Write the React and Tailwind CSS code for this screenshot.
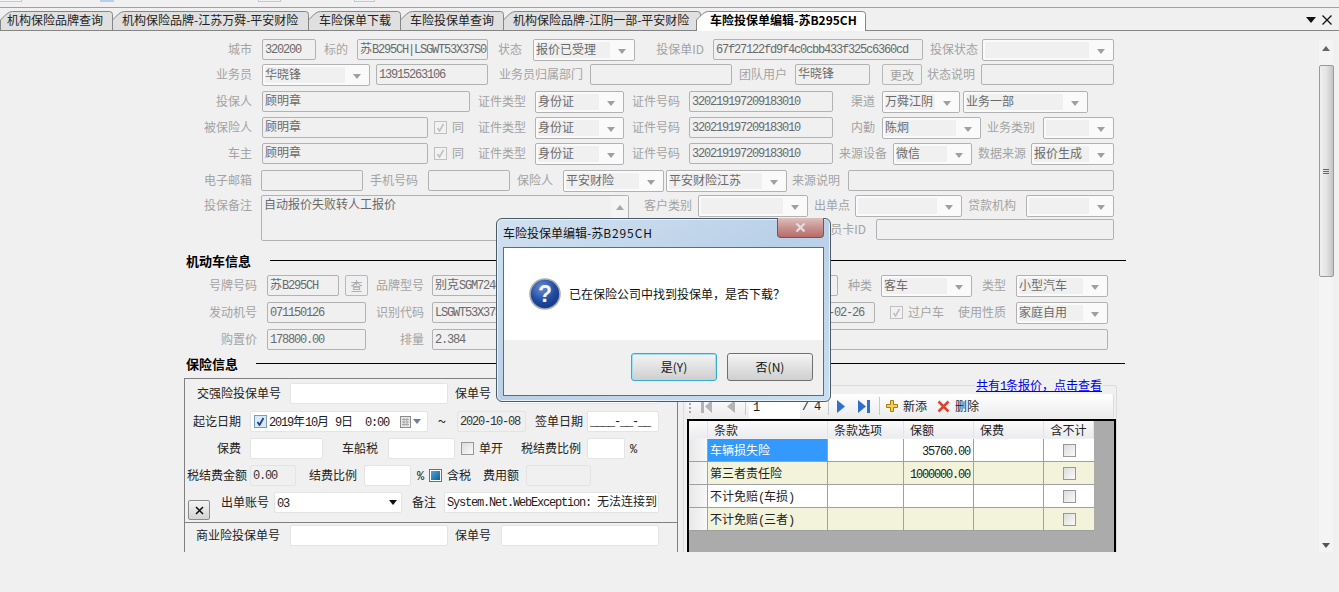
import React from 'react'

const MONO = "font-['Liberation_Mono',monospace] text-[12px] tracking-[-1.2px]"

// latin runs get the narrow mono face, the rest stays CJK
function Sim({ text }) {
  return text.split(/([\u3400-\u9fff，：]+)/).map((part, i) =>
    /[\u3400-\u9fff]/.test(part)
      ? <span key={i}>{part}</span>
      : <span key={i} className={MONO}>{part}</span>
  )
}

const Lbl = ({ className = '', children }) => (
  <span className={`shrink-0 text-right text-[#a3a3a3] leading-[19px] h-[21px] whitespace-pre ${className}`}>{children}</span>
)

const BLbl = ({ className = '', children }) => (
  <span className={`shrink-0 text-right text-[#222222] leading-[19px] h-[21px] whitespace-pre ${className}`}>{children}</span>
)

const Inp = ({ className = '', text = '' }) => (
  <div className={`shrink-0 h-[21px] border border-[#b2b2b2] rounded-[2px] bg-[#f0f0f0] pl-[2px] text-[#6a6a6a] leading-[16px] whitespace-pre overflow-hidden ${className}`}>
    <Sim text={text} />
  </div>
)

const WInp = ({ className = '', text = '' }) => (
  <div className={`shrink-0 h-[21px] border border-[#e4e4e4] rounded-[2px] bg-white pl-[2px] text-[#222222] leading-[16px] whitespace-pre overflow-hidden ${className}`}>
    <Sim text={text} />
  </div>
)

const RO = ({ className = '', text = '' }) => (
  <div className={`shrink-0 h-[21px] border border-[#e4e4e4] rounded-[2px] bg-[#f0f0f0] pl-[2px] text-[#333333] leading-[16px] whitespace-pre overflow-hidden ${className}`}>
    <Sim text={text} />
  </div>
)

const Tri = ({ className = '', color = '#a0a0a0' }) => (
  <svg width="8" height="5" viewBox="0 0 8 5" className={`shrink-0 ${className}`}>
    <path d="M0 0H8L4 5Z" fill={color} />
  </svg>
)

const Combo = ({ className = '', text = '' }) => (
  <div className={`shrink-0 h-[22px] flex border border-[#b2b2b2] rounded-[2px] bg-[#fafafa] pl-[2px] py-[2px] ${className}`}>
    <div className="flex-1 min-w-0 bg-[#f0f0f0] text-[#6a6a6a] leading-[14px] whitespace-pre">{text}</div>
    <div className="w-[24px] shrink-0 flex items-center justify-center pt-[2px]"><Tri /></div>
  </div>
)

const GBtn = ({ className = '', children }) => (
  <div className={`shrink-0 h-[21px] border border-[#b8b8b8] rounded-[2px] bg-[#f0f0f0] text-[#a3a3a3] flex items-center justify-center ${className}`}>{children}</div>
)

const GCheck = ({ className = '' }) => (
  <div className={`shrink-0 w-[13px] h-[13px] mt-[4px] border border-[#c0c0c0] bg-[#f2f2f2] flex items-center justify-center ${className}`}>
    <svg width="9" height="9" viewBox="0 0 9 9"><path d="M1.5 5L3.5 8L7.5 1" fill="none" stroke="#c0c0c0" strokeWidth="1.6" /></svg>
  </div>
)

const Box = ({ className = '' }) => (
  <div className={`shrink-0 w-[13px] h-[13px] border border-[#979797] bg-gradient-to-br from-[#dcdcdc] to-[#fafafa] ${className}`} />
)

const Row = ({ className = '', children }) => (
  <div className={`flex items-start shrink-0 ${className}`}>{children}</div>
)

const Section = ({ title, lineClass }) => (
  <div className="flex items-center h-[15px] pl-[186px] shrink-0">
    <span className="text-[13px] font-bold text-black leading-none whitespace-pre">{title}</span>
    <div className={`h-px bg-black w-full ${lineClass}`} />
  </div>
)

const tabs = [
  { text: '机构保险品牌查询', w: 113, box: 'w-[113px] pl-[7px]' },
  { text: '机构保险品牌-江苏万舜-平安财险', w: 197, box: 'w-[197px] pl-[10px] -ml-px' },
  { text: '车险保单下载', w: 93, box: 'w-[93px] pl-[11px] -ml-px' },
  { text: '车险投保单查询', w: 104, box: 'w-[104px] pl-[10px] -ml-px' },
  { text: '机构保险品牌-江阴一部-平安财险', w: 198, box: 'w-[198px] pl-[10px] -ml-px' },
]

function Tab({ text, w, box, active }) {
  const d = `M0.5 23V13L6.5 7Q9.5 4.5 12.5 4.5H${w - 3.5}Q${w - 0.5} 4.5 ${w - 0.5} 7.5V23`
  return (
    <div className={`relative shrink-0 h-[24px] ${box}`}>
      <svg width={w} height="24" viewBox={`0 0 ${w} 24`} className="absolute left-0 top-0">
        <path d={d} fill={active ? '#ffffff' : '#e0e0e0'} stroke="#858585" />
      </svg>
      <span className={`relative block pt-[4px] leading-[18px] whitespace-pre ${active ? 'font-bold text-black' : 'text-[#222222]'}`}>{text}</span>
    </div>
  )
}

const clauses = [
  { name: '车辆损失险', amount: '35760.00', bg: 'bg-white', first: 'bg-[#3399ff] text-white' },
  { name: '第三者责任险', amount: '1000000.00', bg: 'bg-[#f3f3dc]', first: '' },
  { name: '不计免赔(车损)', amount: '', bg: 'bg-white', first: '' },
  { name: '不计免赔(三者)', amount: '', bg: 'bg-[#f3f3dc]', first: '' },
]

function ClauseGrid() {
  const headCell = 'h-[17px] border-r border-[#e4e4e4] bg-gradient-to-b from-[#fbfbfb] to-[#ececf0] text-[#222222] pl-[6px] leading-[17px] shrink-0'
  return (
    <div className="mt-px ml-[3px] w-[429px] h-[200px] bg-[#ababab] border-t-2 border-x-2 border-black">
      <div className="flex">
        <div className={`${headCell} w-[19px]`} />
        <div className={`${headCell} w-[120px]`}>条款</div>
        <div className={`${headCell} w-[76px]`}>条款选项</div>
        <div className={`${headCell} w-[70px]`}>保额</div>
        <div className={`${headCell} w-[70px]`}>保费</div>
        <div className={`${headCell} w-[50px] text-center !pl-0`}>含不计</div>
      </div>
      <div className="h-px bg-[#f0f0f0] w-[405px]" />
      {clauses.map((c) => (
        <div key={c.name} className="flex h-[23px] w-[405px] border-b border-[#a0a0a0]">
          <div className="w-[19px] shrink-0 border-r border-[#a0a0a0] bg-gradient-to-r from-[#e8e8e8] to-[#f8f8f8]" />
          <div className={`w-[120px] shrink-0 border-r border-[#a0a0a0] pl-[2px] leading-[22px] whitespace-pre ${c.first || `${c.bg} text-[#222222]`}`}><Sim text={c.name} /></div>
          <div className={`w-[76px] shrink-0 border-r border-[#a0a0a0] ${c.bg}`} />
          <div className={`w-[70px] shrink-0 border-r border-[#a0a0a0] text-right pr-[3px] leading-[22px] text-[#222222] ${c.bg}`}><Sim text={c.amount} /></div>
          <div className={`w-[70px] shrink-0 border-r border-[#a0a0a0] ${c.bg}`} />
          <div className={`w-[50px] shrink-0 flex items-center justify-center ${c.bg}`}><Box /></div>
        </div>
      ))}
    </div>
  )
}

function GridToolbar() {
  return (
    <div className="ml-[3px] w-[427px] h-[24px] flex items-center bg-gradient-to-b from-white to-[#ececec] rounded-t-[3px] border-r border-[#dcdcdc] text-[#222222]">
      <div className="ml-[2px] w-[3px] h-[14px] shrink-0 border-l-2 border-dotted border-[#a8a8a8]" />
      <svg width="11" height="13" viewBox="0 0 11 13" className="ml-[9px] shrink-0"><path d="M0 0H3V13H0ZM11 0V13L4 6.5Z" fill="#b4b4b4" /></svg>
      <svg width="8" height="13" viewBox="0 0 8 13" className="ml-[15px] shrink-0"><path d="M8 0V13L0 6.5Z" fill="#b4b4b4" /></svg>
      <div className="ml-[10px] w-px h-[18px] bg-[#c8c8c8] shrink-0" />
      <div className="ml-[3px] w-[51px] h-[24px] bg-white pl-[4px] leading-[24px] shrink-0"><Sim text="1" /></div>
      <span className="ml-[2px] w-[17px] shrink-0 whitespace-pre"><Sim text="/ 4" /></span>
      <div className="ml-[9px] w-px h-[18px] bg-[#c8c8c8] shrink-0" />
      <svg width="8" height="13" viewBox="0 0 8 13" className="ml-[8px] shrink-0"><path d="M0 0L8 6.5L0 13Z" fill="#2f6fd0" /></svg>
      <svg width="12" height="13" viewBox="0 0 12 13" className="ml-[13px] shrink-0"><path d="M0 0L8 6.5L0 13ZM9 0H12V13H9Z" fill="#2f6fd0" /></svg>
      <div className="ml-[9px] w-px h-[18px] bg-[#c8c8c8] shrink-0" />
      <svg width="12" height="12" viewBox="0 0 12 12" className="ml-[6px] shrink-0"><path d="M4.5 .5H7.5V4.5H11.5V7.5H7.5V11.5H4.5V7.5H.5V4.5H4.5Z" fill="#f7cf4f" stroke="#a87b12" /></svg>
      <span className="ml-[5px] w-[24px] shrink-0">新添</span>
      <svg width="13" height="13" viewBox="0 0 13 13" className="ml-[10px] shrink-0"><path d="M1.5 1.5L11.5 11.5M11.5 1.5L1.5 11.5" stroke="#e2412c" strokeWidth="2.6" /></svg>
      <span className="ml-[5px] w-[24px] shrink-0">删除</span>
    </div>
  )
}

function Dialog() {
  return (
    <div className="absolute left-[496px] top-[218px] w-[335px] h-[184px] rounded-[6px] border border-[#4a5a68] bg-gradient-to-br from-[#d2e1f0] via-[#b9d0e8] to-[#c8def2] px-[6px] shadow-[inset_0_0_0_1px_#e6f0f8]">
      <div className="h-[28px] leading-[27px] text-[#111111] whitespace-pre">车险投保单编辑-苏<span className="tracking-[0.9px]">B295CH</span></div>
      <div className="absolute right-[6px] -top-px w-[47px] h-[20px] rounded-b-[4px] border border-t-0 border-[#6a5a5a] bg-gradient-to-b from-[#d9c0be] via-[#c99290] to-[#b86b68] flex items-center justify-center">
        <svg width="11" height="9" viewBox="0 0 11 9"><path d="M1.5 .5L9.5 8.5M9.5 .5L1.5 8.5" stroke="#e8dcdc" strokeWidth="2.2" /></svg>
      </div>
      <div className="h-[149px] border border-[#5d6b7a] bg-white flex flex-col">
        <div className="h-[92px] flex items-center shrink-0">
          <svg width="32" height="32" viewBox="0 0 32 32" className="ml-[25px] shrink-0">
            <defs>
              <radialGradient id="qball" cx="0.4" cy="0.3" r="0.8">
                <stop offset="0" stopColor="#6d8fd0" />
                <stop offset="0.55" stopColor="#1f4b9f" />
                <stop offset="1" stopColor="#14317e" />
              </radialGradient>
            </defs>
            <circle cx="16" cy="16" r="15" fill="url(#qball)" stroke="#a9aeb4" strokeWidth="1.6" />
            <text x="16" y="24" textAnchor="middle" fontSize="23" fontWeight="700" fill="#f4f6fa" fontFamily="Liberation Sans, sans-serif">?</text>
          </svg>
          <span className="ml-[8px] text-[#111111] whitespace-pre">已在保险公司中找到投保单，是否下载？</span>
        </div>
        <div className="flex-1 bg-[#f0f0f0] flex justify-end gap-[10px] pr-[10px] pt-[13px]">
          <div className="w-[86px] h-[28px] rounded-[3px] border border-[#3aa8d8] bg-gradient-to-b from-[#f4f4f4] to-[#cfcfcf] flex items-center justify-center text-[#111111] shadow-[inset_0_0_0_1px_#9fe0f8]">是(Y)</div>
          <div className="w-[86px] h-[28px] rounded-[3px] border border-[#707070] bg-gradient-to-b from-[#f4f4f4] to-[#cfcfcf] flex items-center justify-center text-[#111111]">否(N)</div>
        </div>
      </div>
    </div>
  )
}

export default function App() {
  return (
    <div className="relative w-[1339px] h-[592px] overflow-hidden bg-[#f0f0f0] text-[12px] [text-spacing-trim:space-all] font-['Noto_Sans_CJK_SC','Liberation_Sans',sans-serif]">
      {/* cut off toolbar above the tabs */}
      <div className="h-[8px] border-b border-[#a0a0a0] flex items-start">
        <div className="w-[22px] h-[2px] border-b border-r border-[#c8c8c8] bg-[#f4f4f4]" />
        <div className="ml-[78px] w-[14px] h-[2px] bg-[#b8cfe8]" />
        <div className="ml-[144px] w-[23px] h-[2px] border border-t-0 border-[#c8c8c8]" />
        <div className="ml-[73px] w-[21px] h-[2px] border border-t-0 border-[#c8c8c8]" />
      </div>

      {/* tab strip */}
      <div className="relative h-[24px] -mt-px flex items-start">
        <div className="absolute left-0 right-0 top-[23px] h-px bg-[#858585]" />
        {tabs.map((t) => <Tab key={t.text} {...t} />)}
        <Tab text="车险投保单编辑-苏B295CH" w={170} box="w-[170px] pl-[14px] -ml-[5px]" active />
        <div className="absolute left-[697px] top-[23px] w-[168px] h-px bg-white" />
        <svg width="10" height="6" viewBox="0 0 10 6" className="absolute left-[1306px] top-[10px]"><path d="M0 0H10L5 6Z" fill="#111111" /></svg>
        <svg width="10" height="10" viewBox="0 0 10 10" className="absolute left-[1322px] top-[8px]"><path d="M.5 .5L9.5 9.5M9.5 .5L.5 9.5" stroke="#111111" strokeWidth="1.3" /></svg>
      </div>

      <div className="flex h-[521px] overflow-hidden">
        <div className="w-[1319px] shrink-0 flex flex-col pt-[8px]">
          <Row className="h-[25px]">
            <Lbl className="w-[252px]">城市</Lbl>
            <Inp className="ml-[10px] w-[54px]" text="320200" />
            <Lbl className="w-[32px]">标的</Lbl>
            <Inp className="ml-[9px] w-[131px]" text="苏B295CH|LSGWT53X37S0" />
            <Lbl className="w-[34px]">状态</Lbl>
            <Combo className="ml-[11px] w-[102px]" text="报价已受理" />
            <Lbl className="w-[69px]">投保单ID</Lbl>
            <Inp className="ml-[9px] w-[210px]" text="67f27122fd9f4c0cbb433f325c6360cd" />
            <Lbl className="w-[55px]">投保状态</Lbl>
            <Combo className="ml-[4px] w-[132px]" />
          </Row>
          <Row className="h-[27px]">
            <Lbl className="w-[252px]">业务员</Lbl>
            <Combo className="ml-[10px] w-[108px]" text="华晓锋" />
            <Inp className="ml-[6px] w-[112px]" text="13915263106" />
            <Lbl className="w-[95px]">业务员归属部门</Lbl>
            <Inp className="ml-[7px] w-[142px]" />
            <Lbl className="w-[55px]">团队用户</Lbl>
            <Inp className="ml-[8px] w-[75px]" text="华晓锋" />
            <GBtn className="ml-[12px] w-[40px]">更改</GBtn>
            <Lbl className="w-[53px]">状态说明</Lbl>
            <Inp className="ml-[6px] w-[133px]" />
          </Row>
          <Row className="h-[26px]">
            <Lbl className="w-[252px]">投保人</Lbl>
            <Inp className="ml-[10px] w-[208px]" text="顾明章" />
            <Lbl className="w-[56px]">证件类型</Lbl>
            <Combo className="ml-[9px] w-[89px]" text="身份证" />
            <Lbl className="w-[56px]">证件号码</Lbl>
            <Inp className="ml-[9px] w-[144px]" text="320219197209183010" />
            <Lbl className="w-[42px]">渠道</Lbl>
            <Combo className="ml-[7px] w-[78px]" text="万舜江阴" />
            <Combo className="ml-[3px] w-[125px]" text="业务一部" />
          </Row>
          <Row className="h-[26px]">
            <Lbl className="w-[252px]">被保险人</Lbl>
            <Inp className="ml-[10px] w-[166px]" text="顾明章" />
            <GCheck className="ml-[6px]" />
            <Lbl className="ml-[5px] w-[12px]">同</Lbl>
            <Lbl className="w-[62px]">证件类型</Lbl>
            <Combo className="ml-[9px] w-[89px]" text="身份证" />
            <Lbl className="w-[56px]">证件号码</Lbl>
            <Inp className="ml-[9px] w-[144px]" text="320219197209183010" />
            <Lbl className="w-[42px]">内勤</Lbl>
            <Combo className="ml-[7px] w-[99px]" text="陈炯" />
            <Lbl className="w-[54px]">业务类别</Lbl>
            <Combo className="ml-[8px] w-[71px]" />
          </Row>
          <Row className="h-[27px]">
            <Lbl className="w-[252px]">车主</Lbl>
            <Inp className="ml-[10px] w-[166px]" text="顾明章" />
            <GCheck className="ml-[6px]" />
            <Lbl className="ml-[5px] w-[12px]">同</Lbl>
            <Lbl className="w-[62px]">证件类型</Lbl>
            <Combo className="ml-[9px] w-[89px]" text="身份证" />
            <Lbl className="w-[56px]">证件号码</Lbl>
            <Inp className="ml-[9px] w-[144px]" text="320219197209183010" />
            <Lbl className="w-[54px]">来源设备</Lbl>
            <Combo className="ml-[6px] w-[79px]" text="微信" />
            <Lbl className="w-[54px]">数据来源</Lbl>
            <Combo className="ml-[5px] w-[83px]" text="报价生成" />
          </Row>
          <Row className="h-[25px]">
            <Lbl className="w-[252px]">电子邮箱</Lbl>
            <Inp className="ml-[9px] w-[102px]" />
            <Lbl className="w-[55px]">手机号码</Lbl>
            <Inp className="ml-[10px] w-[82px]" />
            <Lbl className="w-[43px]">保险人</Lbl>
            <Combo className="ml-[10px] w-[101px]" text="平安财险" />
            <Combo className="ml-[2px] w-[121px]" text="平安财险江苏" />
            <Lbl className="w-[53px]">来源说明</Lbl>
            <Inp className="ml-[8px] w-[266px]" />
          </Row>
          <Row className="h-[58px]">
            <Lbl className="w-[252px]">投保备注</Lbl>
            <div className="ml-[9px] w-[368px] h-[46px] shrink-0 flex border border-[#b2b2b2] rounded-[2px] bg-[#f0f0f0] text-[#6a6a6a]">
              <div className="flex-1 pl-[2px] pt-[1px] leading-[14px]">自动报价失败转人工报价</div>
              <div className="w-[17px] shrink-0 bg-[#f4f4f4] flex justify-center pt-[9px]">
                <svg width="8" height="5" viewBox="0 0 8 5"><path d="M4 0L8 5H0Z" fill="#a8a8a8" /></svg>
              </div>
            </div>
            <div className="flex flex-col">
              <Row className="h-[24px]">
                <Lbl className="w-[63px]">客户类别</Lbl>
                <Combo className="ml-[6px] w-[110px]" />
                <Lbl className="w-[42px]">出单点</Lbl>
                <Combo className="ml-[5px] w-[107px]" />
                <Lbl className="w-[54px]">贷款机构</Lbl>
                <Combo className="ml-[10px] w-[88px]" />
              </Row>
              <Row>
                <Lbl className="w-[237px]">会员卡ID</Lbl>
                <Inp className="ml-[10px] w-[238px]" />
              </Row>
            </div>
          </Row>

          <Section title="机动车信息" lineClass="ml-[19px] !w-[856px]" />
          <Row className="h-[27px] mt-[7px]">
            <Lbl className="w-[257px]">号牌号码</Lbl>
            <Inp className="ml-[10px] w-[72px]" text="苏B295CH" />
            <GBtn className="ml-[6px] w-[23px]">查</GBtn>
            <Lbl className="w-[56px]">品牌型号</Lbl>
            <Inp className="ml-[8px] w-[406px]" text="别克SGM7240" />
            <Lbl className="w-[34px]">种类</Lbl>
            <Combo className="ml-[9px] w-[91px]" text="客车" />
            <Lbl className="w-[34px]">类型</Lbl>
            <Combo className="ml-[10px] w-[92px]" text="小型汽车" />
          </Row>
          <Row className="h-[27px]">
            <Lbl className="w-[257px]">发动机号</Lbl>
            <Inp className="ml-[10px] w-[99px]" text="071150126" />
            <Lbl className="w-[58px]">识别代码</Lbl>
            <Inp className="ml-[8px] w-[330px]" text="LSGWT53X37S0" />
            <Inp className="ml-[8px] w-[105px] text-right pr-[10px]" text="2008-02-26" />
            <GCheck className="ml-[15px]" />
            <Lbl className="ml-[5px] w-[36px]">过户车</Lbl>
            <Lbl className="w-[62px]">使用性质</Lbl>
            <Combo className="ml-[10px] w-[92px]" text="家庭自用" />
          </Row>
          <Row className="h-[27px]">
            <Lbl className="w-[257px]">购置价</Lbl>
            <Inp className="ml-[10px] w-[99px]" text="178800.00" />
            <Lbl className="w-[58px]">排量</Lbl>
            <Inp className="ml-[8px] w-[676px]" text="2.384" />
          </Row>

          <Section title="保险信息" lineClass="ml-[18px] !w-[869px]" />

          <div className="flex mt-[7px] ml-[184px] shrink-0 h-[174px]">
            {/* left: compulsory / commercial policy block */}
            <div className="w-[494px] h-[174px] shrink-0 border-t border-x border-[#808080]">
              <div className="pt-[4px]">
                <Row className="h-[28px]">
                  <BLbl className="w-[96px]">交强险投保单号</BLbl>
                  <WInp className="ml-[9px] w-[158px]" />
                  <BLbl className="w-[43px]">保单号</BLbl>
                  <WInp className="ml-[10px] w-[158px]" />
                </Row>
                <Row className="h-[27px]">
                  <BLbl className="w-[56px]">起讫日期</BLbl>
                  <div className="ml-[9px] w-[178px] h-[21px] shrink-0 flex items-center border border-[#e4e4e4] rounded-[2px] bg-white text-[#222222] whitespace-pre">
                    <div className="ml-[3px] w-[13px] h-[13px] shrink-0 border border-[#7a9cc0] bg-[#dbeafa] flex items-center justify-center">
                      <svg width="9" height="9" viewBox="0 0 9 9"><path d="M1.5 5L3.5 8L7.5 1" fill="none" stroke="#1d3f9a" strokeWidth="1.8" /></svg>
                    </div>
                    <span className="ml-[2px] w-[131px] shrink-0"><Sim text="2019" />年<Sim text="10" />月<Sim text=" 9" />日<Sim text="  0:00" /></span>
                    <svg width="11" height="12" viewBox="0 0 11 12" className="shrink-0">
                      <rect x=".5" y=".5" width="10" height="11" fill="#e8e8e8" stroke="#8c8c8c" />
                      <path d="M2 3.5H9M2 6H9M2 8.5H9M4 2V10M7 2V10" stroke="#a8a8a8" />
                    </svg>
                    <Tri className="ml-[2px]" color="#6f7fa0" />
                  </div>
                  <BLbl className="ml-[8px] w-[12px] !text-center text-[15px]">~</BLbl>
                  <RO className="ml-[9px] w-[69px]" text="2020-10-08" />
                  <BLbl className="w-[57px]">签单日期</BLbl>
                  <WInp className="ml-[4px] w-[72px]" text="____-__-__" />
                </Row>
                <Row className="h-[27px]">
                  <BLbl className="w-[56px]">保费</BLbl>
                  <WInp className="ml-[9px] w-[73px]" />
                  <BLbl className="w-[55px]">车船税</BLbl>
                  <WInp className="ml-[10px] w-[67px]" />
                  <Box className="ml-[6px] mt-[4px]" />
                  <BLbl className="ml-[5px] w-[24px]">单开</BLbl>
                  <BLbl className="w-[78px]">税结费比例</BLbl>
                  <WInp className="ml-[6px] w-[38px]" />
                  <BLbl className="ml-[4px] w-[7px]"><Sim text="%" /></BLbl>
                </Row>
                <Row className="h-[27px]">
                  <BLbl className="w-[62px]">税结费金额</BLbl>
                  <RO className="ml-[3px] w-[46px]" text="0.00" />
                  <BLbl className="w-[61px]">结费比例</BLbl>
                  <WInp className="ml-[7px] w-[47px]" />
                  <BLbl className="ml-[5px] w-[7px]"><Sim text="%" /></BLbl>
                  <div className="ml-[6px] mt-[4px] w-[13px] h-[13px] shrink-0 border border-[#707070] bg-white p-px">
                    <div className="w-full h-full bg-gradient-to-br from-[#4aa8dc] to-[#0f5f96]" />
                  </div>
                  <BLbl className="ml-[5px] w-[24px]">含税</BLbl>
                  <BLbl className="w-[48px]">费用额</BLbl>
                  <RO className="ml-[7px] w-[65px]" />
                </Row>
                <Row className="h-[30px]">
                  <div className="ml-[3px] mt-[8px] w-[22px] h-[20px] shrink-0 rounded-[2px] border border-[#8a8a8a] bg-gradient-to-b from-[#f4f4f4] to-[#d4d4d4] flex items-center justify-center">
                    <svg width="9" height="9" viewBox="0 0 9 9"><path d="M1 1L8 8M8 1L1 8" stroke="#111111" strokeWidth="1.5" /></svg>
                  </div>
                  <BLbl className="w-[59px]">出单账号</BLbl>
                  <div className="ml-[5px] w-[128px] h-[21px] shrink-0 flex items-center justify-between border border-[#e4e4e4] rounded-[2px] bg-white pl-[2px] pr-[4px] text-[#222222]">
                    <span><Sim text="03" /></span>
                    <Tri color="#111111" />
                  </div>
                  <BLbl className="w-[34px]">备注</BLbl>
                  <WInp className="ml-[8px] w-[215px]" text="System.Net.WebException: 无法连接到" />
                </Row>
              </div>
              <div className="border-t border-[#808080] pt-[2px]">
                <Row>
                  <BLbl className="w-[95px]">商业险投保单号</BLbl>
                  <WInp className="ml-[10px] w-[158px]" />
                  <BLbl className="w-[43px]">保单号</BLbl>
                  <WInp className="ml-[10px] w-[158px]" />
                </Row>
              </div>
            </div>

            {/* right: clause group */}
            <div className="relative mt-[7px] ml-[5px] w-[434px] h-[167px] shrink-0 border-t border-x border-[#dcdcdc] rounded-t-[3px] pt-[8px]">
              <a className="absolute right-[13px] -top-[9px] bg-[#f0f0f0] px-[1px] h-[16px] leading-[16px] text-[#0000ee] underline whitespace-pre">
                共有<Sim text="1" />条报价，点击查看
              </a>
              <GridToolbar />
              <ClauseGrid />
            </div>
          </div>
        </div>

        {/* main scrollbar */}
        <div className="w-[14px] shrink-0 mt-[9px] bg-[#f4f4f4] flex flex-col items-center">
          <svg width="8" height="5" viewBox="0 0 8 5" className="mt-[6px] shrink-0"><path d="M4 0L8 5H0Z" fill="#666666" /></svg>
          <div className="mt-[14px] w-[15px] h-[212px] shrink-0 rounded-[2px] border border-[#9a9a9a] bg-gradient-to-r from-[#f0f0f0] via-[#e4e4e4] to-[#c4c4c4] flex flex-col items-center justify-center gap-[1px]">
            <div className="w-[6px] h-px bg-[#666666]" />
            <div className="w-[6px] h-px bg-[#666666]" />
            <div className="w-[6px] h-px bg-[#666666]" />
          </div>
          <svg width="8" height="5" viewBox="0 0 8 5" className="mt-[266px] shrink-0"><path d="M0 0H8L4 5Z" fill="#555555" /></svg>
        </div>
      </div>

      <Dialog />
    </div>
  )
}
